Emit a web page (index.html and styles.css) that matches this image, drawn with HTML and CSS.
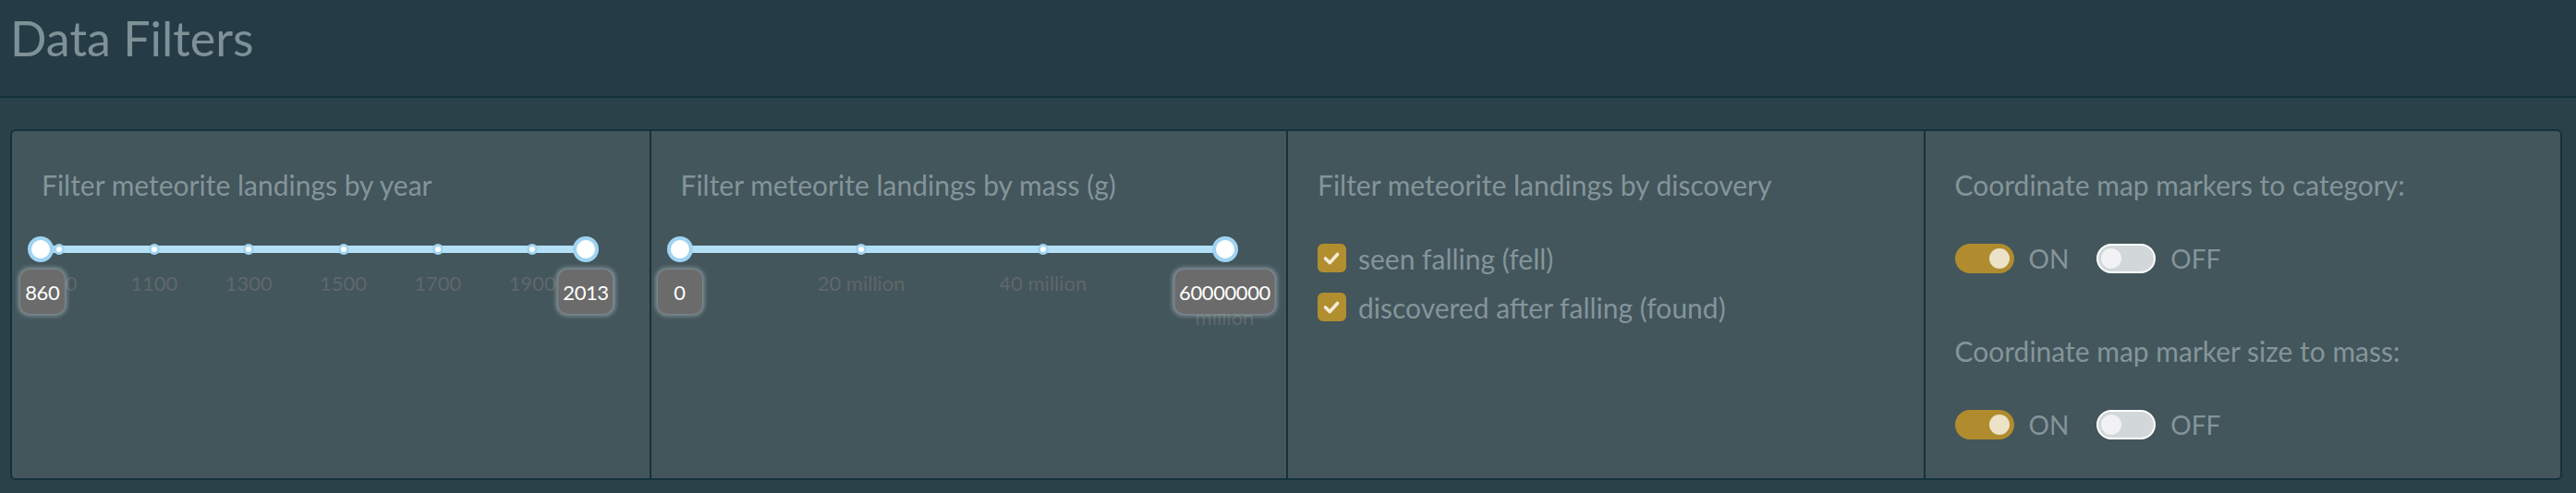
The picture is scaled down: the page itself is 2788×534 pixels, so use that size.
FILE: index.html
```html
<!DOCTYPE html>
<html lang="en">
<head>
<meta charset="utf-8">
<title>Data Filters</title>
<link rel="stylesheet" href="styles.css">
</head>
<body>
<header class="page-header">
  <h1 class="page-title">Data Filters</h1>
</header>
<main class="content">
  <section class="filters">
    <div class="filter-col">
      <h2 class="filter-title">Filter meteorite landings by year</h2>
      <div class="slider">
        <div class="track"></div>
        <span class="tick" style="left:3.47%"></span>
        <span class="tick" style="left:20.82%"></span>
        <span class="tick" style="left:38.16%"></span>
        <span class="tick" style="left:55.51%"></span>
        <span class="tick" style="left:72.85%"></span>
        <span class="tick" style="left:90.2%"></span>
        <span class="tick-label" style="left:3.47%">900</span>
        <span class="tick-label" style="left:20.82%">1100</span>
        <span class="tick-label" style="left:38.16%">1300</span>
        <span class="tick-label" style="left:55.51%">1500</span>
        <span class="tick-label" style="left:72.85%">1700</span>
        <span class="tick-label" style="left:90.2%">1900</span>
        <span class="handle" style="left:0%"></span>
        <span class="handle" style="left:100%"></span>
        <span class="badge" style="left:0.3%">860</span>
        <span class="badge" style="left:100%">2013</span>
      </div>
    </div>
    <div class="filter-col">
      <h2 class="filter-title">Filter meteorite landings by mass (g)</h2>
      <div class="slider">
        <div class="track"></div>
        <span class="tick" style="left:33.333%"></span>
        <span class="tick" style="left:66.667%"></span>
        <span class="tick-label" style="left:33.333%">20 million</span>
        <span class="tick-label" style="left:66.667%">40 million</span>
        <span class="tick-label wrap" style="left:100%">60 million</span>
        <span class="handle" style="left:0%"></span>
        <span class="handle" style="left:100%"></span>
        <span class="badge" style="left:0%">0</span>
        <span class="badge" style="left:100%">60000000</span>
      </div>
    </div>
    <div class="filter-col">
      <h2 class="filter-title">Filter meteorite landings by discovery</h2>
      <div class="checks">
        <label class="check-row">
          <span class="checkbox"><svg viewBox="0 0 31 31" width="31" height="31"><path d="M8.5 16 L13.3 20.6 L21.5 11.5" fill="none" stroke="#f4ecd6" stroke-width="3.6" stroke-linecap="round" stroke-linejoin="round"/></svg></span>
          <span class="check-text">seen falling (fell)</span>
        </label>
        <label class="check-row">
          <span class="checkbox"><svg viewBox="0 0 31 31" width="31" height="31"><path d="M8.5 16 L13.3 20.6 L21.5 11.5" fill="none" stroke="#f4ecd6" stroke-width="3.6" stroke-linecap="round" stroke-linejoin="round"/></svg></span>
          <span class="check-text">discovered after falling (found)</span>
        </label>
      </div>
    </div>
    <div class="filter-col">
      <div class="switch-group">
        <h2 class="filter-title">Coordinate map markers to category:</h2>
        <div class="switches">
          <span class="switch on"><span class="knob"></span></span>
          <span class="switch-text gap">ON</span>
          <span class="switch off"><span class="knob"></span></span>
          <span class="switch-text">OFF</span>
        </div>
      </div>
      <div class="switch-group">
        <h2 class="filter-title">Coordinate map marker size to mass:</h2>
        <div class="switches">
          <span class="switch on"><span class="knob"></span></span>
          <span class="switch-text gap">ON</span>
          <span class="switch off"><span class="knob"></span></span>
          <span class="switch-text">OFF</span>
        </div>
      </div>
    </div>
  </section>
</main>
</body>
</html>
```
FILE: styles.css
```css
html, body {
  margin: 0;
  padding: 0;
}

body {
  background: #2a414a;
  font-family: Lato, "Open Sans", sans-serif;
  color: #84959a;
  width: 2788px;
  height: 534px;
  overflow: hidden;
}

.page-header {
  height: 106px;
  box-sizing: border-box;
  background: #253c47;
  border-bottom: 2px solid #123039;
  padding: 10px 0 0 11px;
}

.page-title {
  margin: 0;
  font-weight: 400;
  font-size: 52px;
  line-height: 62px;
  color: #7e9197;
}

.content {
  padding: 34px 15px 0 11px;
}

.filters {
  display: grid;
  grid-template-columns: repeat(4, 1fr);
  height: 380px;
  box-sizing: border-box;
  background: #43565c;
  border: 2px solid #15313b;
  border-radius: 6px;
}

.filter-col {
  padding: 40px 30px 0 32px;
  display: flex;
  flex-direction: column;
}

.filter-col + .filter-col {
  border-left: 2px solid #15313b;
}

.filter-title {
  margin: 0;
  font-weight: 400;
  font-size: 30px;
  line-height: 36px;
  color: #84959a;
  white-space: nowrap;
}

/* slider */
.slider {
  position: relative;
  width: 590px;
  height: 90px;
  margin: 48px 0 0 -1px;
}

.track {
  height: 8px;
  border-radius: 4px;
  background: #b3e0f7;
}

.tick {
  position: absolute;
  top: 4px;
  width: 6px;
  height: 6px;
  border: 3px solid #a2d5f2;
  border-radius: 50%;
  background: #ffffff;
  transform: translate(-50%, -50%);
}

.handle {
  position: absolute;
  top: 4px;
  width: 20px;
  height: 20px;
  border: 4px solid #9fd3f1;
  border-radius: 50%;
  background: #ffffff;
  transform: translate(-50%, -50%);
  z-index: 2;
}

.tick-label {
  position: absolute;
  top: 22px;
  transform: translateX(-50%);
  font-size: 22px;
  line-height: 37px;
  color: #5f676a;
  white-space: nowrap;
  text-align: center;
}

.tick-label.wrap {
  white-space: normal;
  width: min-content;
}

.badge {
  position: absolute;
  top: 26px;
  height: 48px;
  min-width: 48px;
  box-sizing: border-box;
  padding: 0 5px;
  display: flex;
  align-items: center;
  justify-content: center;
  transform: translateX(-50%);
  background: #6b6b6b;
  border-radius: 10px;
  box-shadow: 0 0 5px 2px rgba(225, 235, 238, 0.45);
  color: #ffffff;
  font-size: 22px;
  letter-spacing: -0.4px;
  z-index: 3;
}

/* checkboxes */
.checks {
  display: flex;
  flex-direction: column;
  gap: 22px;
  margin-top: 46px;
}

.check-row {
  display: flex;
  align-items: center;
  gap: 13px;
  height: 31px;
}

.checkbox {
  width: 31px;
  height: 31px;
  border-radius: 6px;
  background: #b18e2f;
  display: flex;
}

.check-text {
  font-size: 30px;
  line-height: 36px;
  color: #84959a;
}

/* switches */
.switch-group {
  display: flex;
  flex-direction: column;
  gap: 46px;
}

.switch-group + .switch-group {
  margin-top: 66px;
}

.switches {
  display: flex;
  align-items: center;
  height: 32px;
}

.switch {
  width: 64px;
  height: 32px;
  box-sizing: border-box;
  border-radius: 16px;
  display: flex;
  align-items: center;
}

.switch.on {
  background: #b08c2e;
  justify-content: flex-end;
  padding: 0 5px;
}

.switch.on .knob {
  background: #ece2c7;
}

.switch.off {
  background: #d2d7d9;
  border: 2px solid #ffffff;
  justify-content: flex-start;
  padding: 0 3px;
}

.switch.off .knob {
  background: #f0f2f4;
}

.knob {
  width: 22px;
  height: 22px;
  border-radius: 50%;
}

.switch-text {
  font-size: 28px;
  line-height: 32px;
  color: #84959a;
  margin-left: 16px;
}

.switch-text.gap {
  margin-right: 30px;
}
```
